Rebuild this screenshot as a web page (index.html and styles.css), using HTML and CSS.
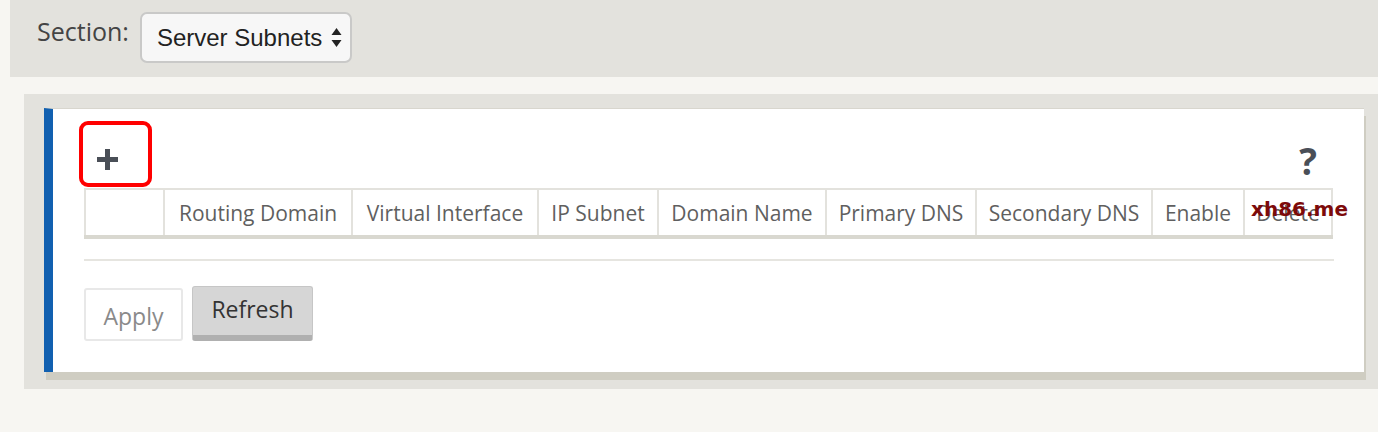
FILE: index.html
```html
<!DOCTYPE html>
<html lang="en">
<head>
<meta charset="utf-8">
<title>Server Subnets</title>
<link rel="stylesheet" href="styles.css">
</head>
<body>
  <div class="topbar">
    <span class="section-label">Section:</span>
    <div class="select">
      <span class="select-text">Server Subnets</span>
      <svg class="select-arrows" width="11" height="20" viewBox="0 0 11 20">
        <path d="M5.5 0 L10.5 7 L0.5 7 Z" fill="#222"/>
        <path d="M5.5 19 L10.5 12 L0.5 12 Z" fill="#222"/>
      </svg>
    </div>
  </div>

  <div class="panel">
    <div class="card">
      <div class="toolbar">
        <div class="add-box">
          <svg class="plus" width="21" height="21" viewBox="0 0 21 21">
            <rect x="0" y="8" width="21" height="5" fill="#4a4f57"/>
            <rect x="8" y="0" width="5" height="21" fill="#4a4f57"/>
          </svg>
        </div>
        <span class="help">?</span>
      </div>

      <div class="table">
        <div class="th"></div>
        <div class="th">Routing Domain</div>
        <div class="th">Virtual Interface</div>
        <div class="th">IP Subnet</div>
        <div class="th">Domain Name</div>
        <div class="th">Primary DNS</div>
        <div class="th">Secondary DNS</div>
        <div class="th">Enable</div>
        <div class="th th-last">Delete<span class="watermark">xh86.me</span></div>
      </div>

      <div class="separator"></div>

      <div class="actions">
        <button class="btn btn-apply">Apply</button>
        <button class="btn btn-refresh">Refresh</button>
      </div>
    </div>
  </div>
</body>
</html>
```

FILE: styles.css
```css
* { box-sizing: border-box; }

body {
  margin: 0;
  background: #f7f6f2;
  font-family: "Open Sans", "Liberation Sans", sans-serif;
  width: 1378px;
  height: 432px;
  overflow: hidden;
}

.topbar {
  margin-left: 10px;
  height: 77px;
  background: #e3e2dd;
  display: flex;
  align-items: flex-start;
  padding-left: 27px;
  padding-top: 12px;
}

.section-label {
  font-size: 25px;
  color: #444;
  margin-top: 2px;
  margin-right: 11px;
}

.select {
  width: 212px;
  height: 51px;
  border: 2px solid #c9c9c8;
  border-radius: 7px;
  background: #f7f7f7;
  display: flex;
  align-items: center;
  padding-left: 15px;
}

.select-text {
  font-family: "Liberation Sans", Arial, sans-serif;
  font-size: 24px;
  color: #222;
  margin-right: 9px;
}

.select-arrows { margin-top: 1px; }

.panel {
  margin-top: 17px;
  margin-left: 24px;
  height: 295px;
  background: #e3e2dd;
  padding: 14px 13px 0 20px;
}

.card {
  position: relative;
  width: 1320px;
  height: 264px;
  background: #fff;
  border-left: 9px solid #1160b0;
  border-top: 1px solid #d8d6ce;
  box-shadow: 2px 8px 0 #cfcdc2;
  padding: 12px 31px 0 31px;
}

.toolbar {
  display: flex;
  justify-content: space-between;
  align-items: flex-start;
  height: 67px;
}

.add-box {
  width: 73px;
  height: 66px;
  border: 4px solid #f00;
  border-radius: 9px;
  padding: 24px 0 0 14px;
  margin-left: -5px;
}

.plus { display: block; }

.help {
  font-size: 37px;
  font-weight: 700;
  color: #4a4f57;
  line-height: 1;
  margin-top: 21px;
  margin-right: 16px;
}

.table {
  display: grid;
  grid-template-columns: 79px 188px 186px 120px 168px 150px 176px 92px 90px;
  width: 1249px;
  border-top: 2px solid #e3e2dd;
  border-bottom: 4px solid #d9d8d0;
}

.th {
  position: relative;
  height: 45px;
  border-left: 2px solid #e3e2dd;
  display: flex;
  align-items: center;
  justify-content: center;
  font-size: 21px;
  color: #5f5f5f;
  white-space: nowrap;
}

.th-last { border-right: 2px solid #e3e2dd; }

.watermark {
  position: absolute;
  left: 6px;
  top: 7px;
  font-family: "DejaVu Sans", sans-serif;
  font-weight: 700;
  font-size: 20px;
  color: #7d0a0a;
}

.separator {
  width: 1250px;
  height: 2px;
  background: #e6e5e0;
  margin-top: 20px;
}

.actions {
  display: flex;
  align-items: flex-end;
  gap: 9px;
  margin-top: 25px;
}

.btn {
  font-family: "Open Sans", "Liberation Sans", sans-serif;
  font-size: 23px;
  border-radius: 3px;
  cursor: pointer;
}

.btn-apply {
  width: 99px;
  height: 53px;
  background: #fff;
  border: 2px solid #e8e8e8;
  color: #8a8a8a;
  padding: 2px 0 0;
}

.btn-refresh {
  width: 121px;
  height: 55px;
  background: #d6d6d6;
  border: 1px solid #c6c6c6;
  border-bottom: 6px solid #b0b0b0;
  color: #333;
  padding: 0 0 4px;
}
```
